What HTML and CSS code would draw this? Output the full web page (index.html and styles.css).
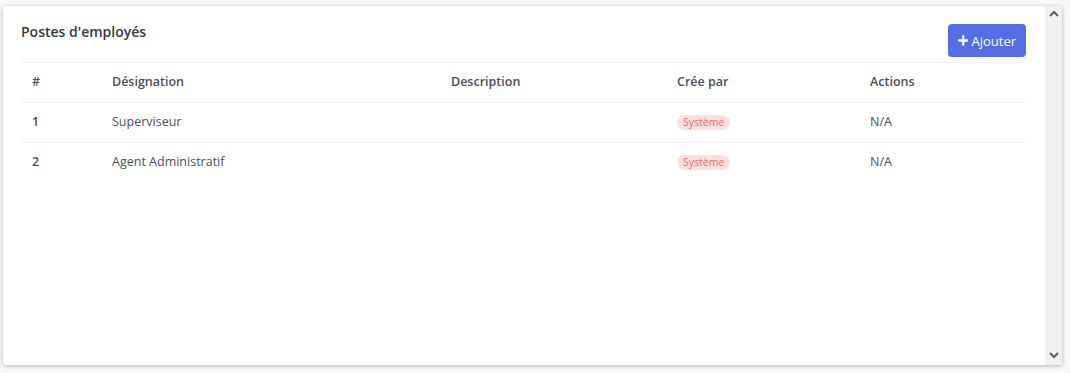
FILE: index.html
```html
<!DOCTYPE html>
<html lang="fr">
<head>
  <meta charset="UTF-8">
  <title>Postes d'employés</title>
  <link rel="stylesheet" href="styles.css">
</head>
<body>
  <div class="frame">
    <div class="card">
      <div class="card-head">
        <h4 class="card-title">Postes d'employés</h4>
        <button class="btn-add">
          <svg width="11" height="11" viewBox="0 0 11 11"><path d="M5.5 1v9M1 5.5h9" stroke="#fff" stroke-width="2.4" stroke-linecap="round"/></svg>
          Ajouter
        </button>
      </div>

      <table class="table">
        <colgroup>
          <col class="c-num">
          <col class="c-des">
          <col class="c-desc">
          <col class="c-by">
          <col>
        </colgroup>
        <thead>
          <tr>
            <th>#</th>
            <th>Désignation</th>
            <th>Description</th>
            <th>Crée par</th>
            <th>Actions</th>
          </tr>
        </thead>
        <tbody>
          <tr>
            <td class="num">1</td>
            <td>Superviseur</td>
            <td></td>
            <td><span class="badge">Système</span></td>
            <td>N/A</td>
          </tr>
          <tr>
            <td class="num">2</td>
            <td>Agent Administratif</td>
            <td></td>
            <td><span class="badge">Système</span></td>
            <td>N/A</td>
          </tr>
        </tbody>
      </table>
    </div>

    <div class="scrollbar">
      <svg width="12" height="8" viewBox="0 0 12 8"><path d="M2 6l4-4 4 4" fill="none" stroke="#5f5f5f" stroke-width="2"/></svg>
      <svg width="12" height="8" viewBox="0 0 12 8"><path d="M2 2l4 4 4-4" fill="none" stroke="#5f5f5f" stroke-width="2"/></svg>
    </div>
  </div>
</body>
</html>
```

FILE: styles.css
```css
body {
  margin: 0;
  padding: 6px 8px 8px 3px;
  background-color: #f8f8fb;
  font-family: 'Open Sans', 'Liberation Sans', sans-serif;
  font-size: 12.5px;
  color: #495057;
}
.frame {
  display: flex;
  height: 359px;
  width: 1059px;
  border-radius: 4px 0 0 4px;
  overflow: hidden;
  box-shadow: 0 1px 4px rgba(0,0,0,0.28);
}
.card {
  flex: 1;
  min-width: 0;
  background: #fff;
  padding: 18px 19px 0 18px;
}
.card-head {
  display: flex;
  justify-content: space-between;
  align-items: flex-start;
  margin-bottom: 5px;
}
.card-title {
  margin: 0;
  font-size: 14px;
  line-height: 16px;
  font-weight: 600;
  color: #343a40;
}
.btn-add {
  display: flex;
  align-items: center;
  gap: 3px;
  height: 33px;
  width: 78px;
  justify-content: center;
  background-color: #556ee6;
  border: none;
  border-radius: 4px;
  color: #fff;
  font-family: inherit;
  font-size: 13px;
  padding: 0 10px;
}
.table {
  width: 100%;
  border-collapse: collapse;
}
.c-num { width: 80px; }
.c-des { width: 339px; }
.c-desc { width: 226px; }
.c-by { width: 193px; }
.table th, .table td {
  height: 35px;
  padding: 1px 11px 3px;
  text-align: left;
  vertical-align: middle;
}
.table th {
  font-weight: 600;
  border-top: 1px solid #eff2f7;
  border-bottom: 1px solid #eff2f7;
}
.table tbody tr + tr td {
  border-top: 1px solid #eff2f7;
}
.table td.num {
  font-weight: 600;
}
.badge {
  display: inline-block;
  padding: 2px 6px;
  border-radius: 8px;
  background-color: #fde1e1;
  color: #f46a6a;
  font-size: 10.5px;
  font-weight: 500;
  line-height: 11px;
}
.scrollbar {
  width: 17px;
  background-color: #f1f1f1;
  display: flex;
  flex-direction: column;
  justify-content: space-between;
  align-items: center;
  padding: 4px 0 6px;
}
```
